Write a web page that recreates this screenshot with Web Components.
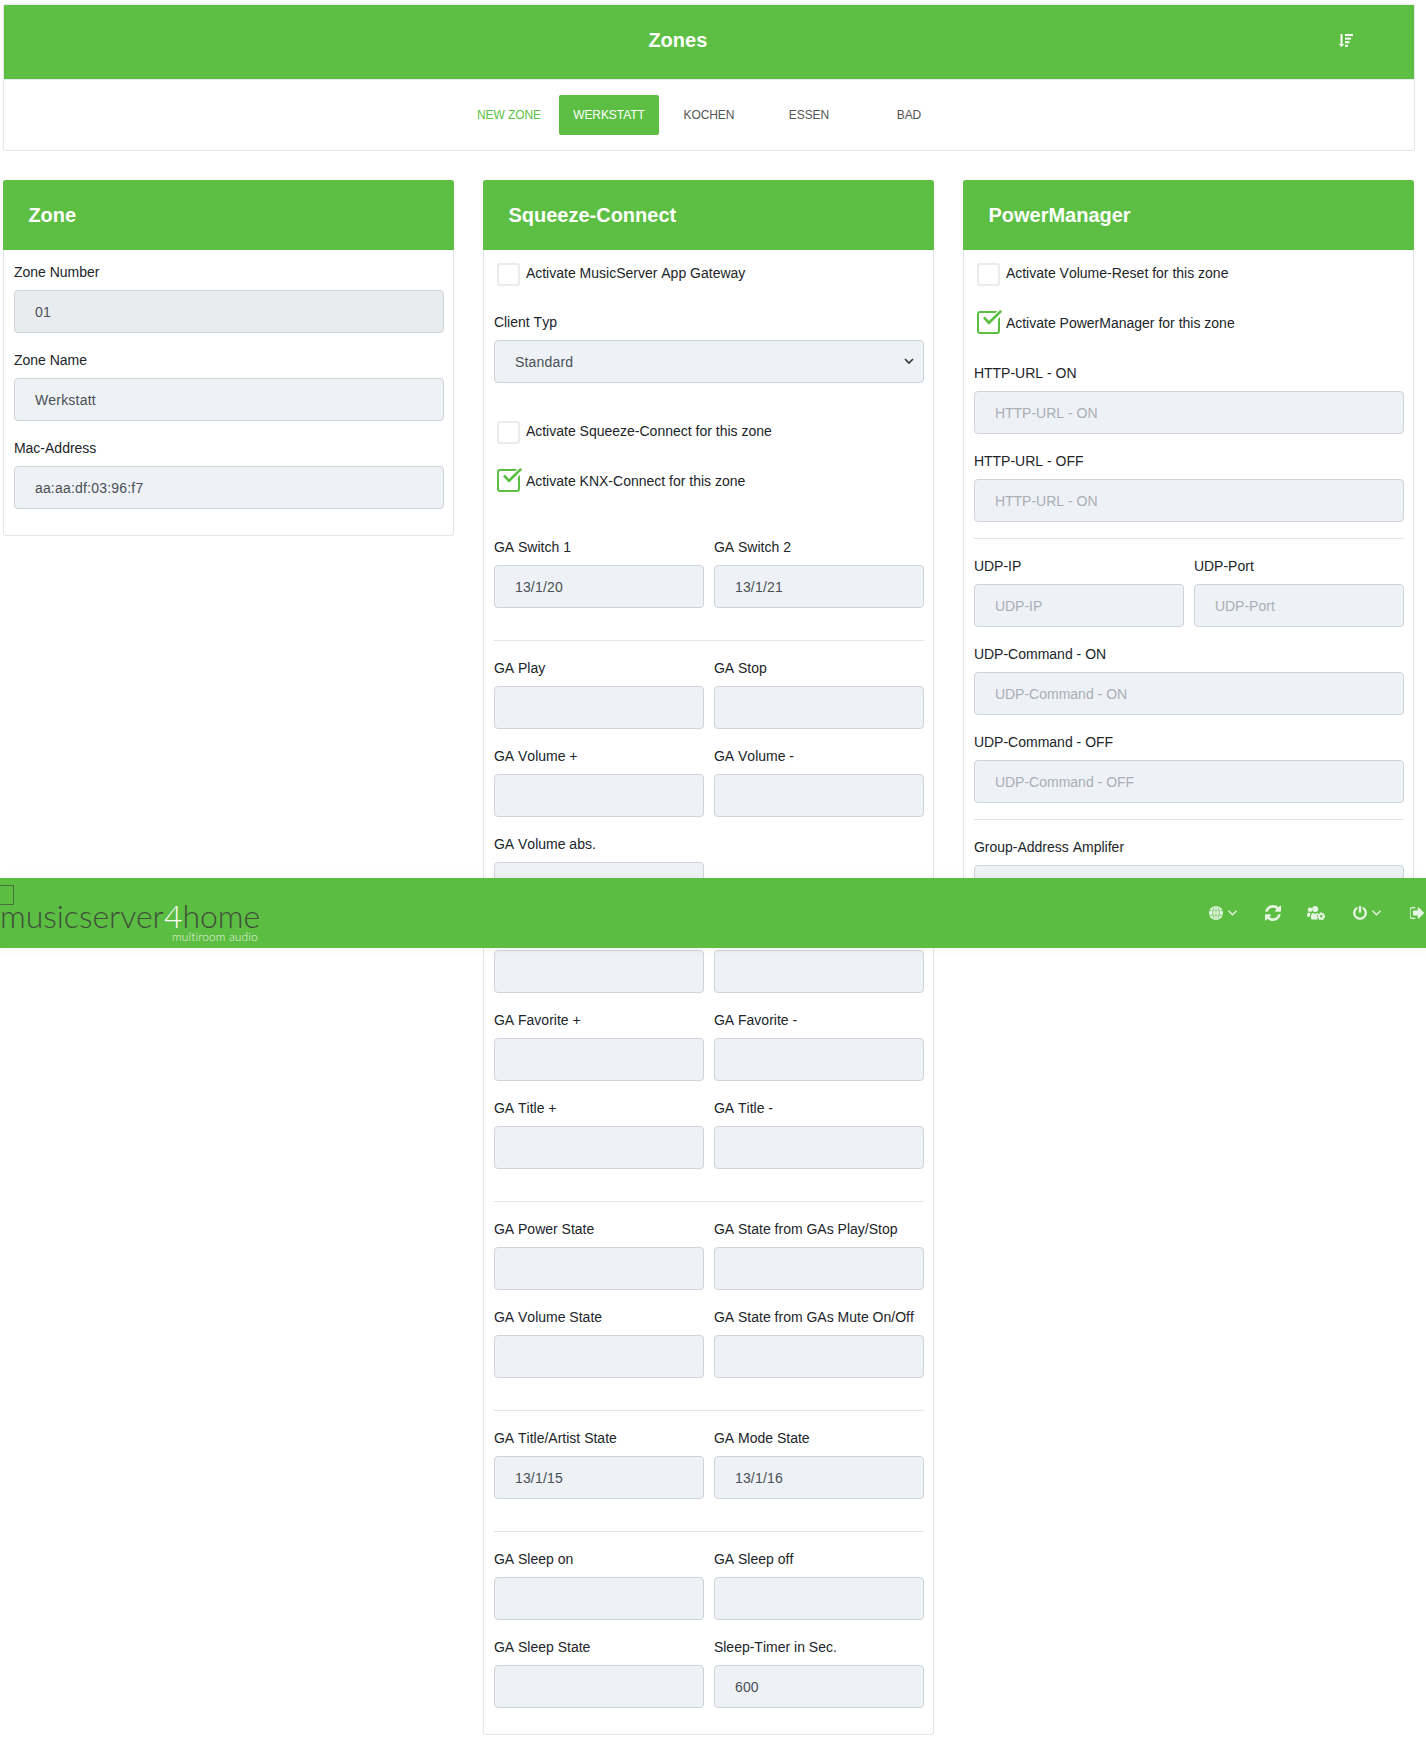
<!DOCTYPE html>
<html lang="en">
  <head>
    <meta charset="UTF-8" />
    <title>Zones</title>
    <style>
      html, body {
        margin: 0;
        background: #fff;
        font: 14px/21px "Liberation Sans", Arial, sans-serif;
        font-kerning: none;
        color: #212529;
      }
      main {
        display: block;
        padding: 4px 11.5px 0 3.4px;
        height: 1743px;
        overflow: hidden;
      }
      .grid {
        display: grid;
        grid-template-columns: repeat(3, 451px);
        gap: 29px;
        align-items: start;
        margin-top: 29px;
      }
      hr-line {
        margin: 16px 0;
      }
      .pair-end {
        margin-bottom: 16px;
      }
    </style>
  </head>
  <body>
    <main>
      <zones-head>
        <zone-tab>New Zone</zone-tab>
        <zone-tab active>Werkstatt</zone-tab>
        <zone-tab plain>Kochen</zone-tab>
        <zone-tab plain>Essen</zone-tab>
        <zone-tab plain>Bad</zone-tab>
      </zones-head>

      <div class="grid">
        <panel-card title="Zone">
          <form-field label="Zone Number" value="01" locked></form-field>
          <form-field label="Zone Name" value="Werkstatt"></form-field>
          <form-field label="Mac-Address" value="aa:aa:df:03:96:f7"></form-field>
        </panel-card>

        <panel-card title="Squeeze-Connect">
          <check-row style="margin-bottom: 25px">Activate MusicServer App Gateway</check-row>
          <form-field label="Client Typ" value="Standard" select style="margin-bottom: 36px"></form-field>
          <check-row style="margin-bottom: 23px">Activate Squeeze-Connect for this zone</check-row>
          <check-row checked style="margin-bottom: 44px">Activate KNX-Connect for this zone</check-row>

          <field-pair class="pair-end">
            <form-field label="GA Switch 1" value="13/1/20"></form-field>
            <form-field label="GA Switch 2" value="13/1/21"></form-field>
          </field-pair>
          <hr-line></hr-line>

          <field-pair>
            <form-field label="GA Play"></form-field>
            <form-field label="GA Stop"></form-field>
          </field-pair>
          <field-pair>
            <form-field label="GA Volume +"></form-field>
            <form-field label="GA Volume -"></form-field>
          </field-pair>
          <field-pair>
            <form-field label="GA Volume abs."></form-field>
            <div></div>
          </field-pair>
          <field-pair>
            <form-field label="&nbsp;"></form-field>
            <form-field label="&nbsp;"></form-field>
          </field-pair>
          <field-pair>
            <form-field label="GA Favorite +"></form-field>
            <form-field label="GA Favorite -"></form-field>
          </field-pair>
          <field-pair class="pair-end">
            <form-field label="GA Title +"></form-field>
            <form-field label="GA Title -"></form-field>
          </field-pair>
          <hr-line></hr-line>

          <field-pair>
            <form-field label="GA Power State"></form-field>
            <form-field label="GA State from GAs Play/Stop"></form-field>
          </field-pair>
          <field-pair class="pair-end">
            <form-field label="GA Volume State"></form-field>
            <form-field label="GA State from GAs Mute On/Off"></form-field>
          </field-pair>
          <hr-line></hr-line>

          <field-pair class="pair-end">
            <form-field label="GA Title/Artist State" value="13/1/15"></form-field>
            <form-field label="GA Mode State" value="13/1/16"></form-field>
          </field-pair>
          <hr-line></hr-line>

          <field-pair>
            <form-field label="GA Sleep on"></form-field>
            <form-field label="GA Sleep off"></form-field>
          </field-pair>
          <field-pair>
            <form-field label="GA Sleep State"></form-field>
            <form-field label="Sleep-Timer in Sec." value="600"></form-field>
          </field-pair>
        </panel-card>

        <panel-card title="PowerManager">
          <check-row style="margin-bottom: 23px">Activate Volume-Reset for this zone</check-row>
          <check-row checked style="margin-bottom: 28px">Activate PowerManager for this zone</check-row>
          <form-field label="HTTP-URL - ON" hint="HTTP-URL - ON"></form-field>
          <form-field label="HTTP-URL - OFF" hint="HTTP-URL - ON"></form-field>
          <hr-line></hr-line>
          <field-pair>
            <form-field label="UDP-IP" hint="UDP-IP"></form-field>
            <form-field label="UDP-Port" hint="UDP-Port"></form-field>
          </field-pair>
          <form-field label="UDP-Command - ON" hint="UDP-Command - ON"></form-field>
          <form-field label="UDP-Command - OFF" hint="UDP-Command - OFF"></form-field>
          <hr-line></hr-line>
          <form-field label="Group-Address Amplifer"></form-field>
        </panel-card>
      </div>
    </main>
    <top-bar></top-bar>

    <script>
      "use strict";
      const GREEN = "#5cbf43";

      class ZonesHead extends HTMLElement {
        constructor() {
          super();
          this.attachShadow({ mode: "open" });
          this.shadowRoot.innerHTML = `
            <style>
              :host { display: block; border: 1px solid #e3e6e8; border-top-color: #e8eaec; border-radius: 3px; height: 147px; box-sizing: border-box; }
              header { display: flex; align-items: center; height: 74px; background: ${GREEN}; color: #fff; padding: 0 60.5px 4px 644px; box-sizing: border-box; }
              h1 { font-size: 20px; line-height: 24px; margin: 0; font-weight: 700; }
              svg { margin-left: auto; width: 14px; height: 13px; fill: #fff; }
              nav { display: flex; justify-content: center; padding-top: 15px; border-top: 1px solid #e8eaec; }
            </style>
            <header>
              <h1>Zones</h1>
              <svg viewBox="0 0 14 13">
                <path d="M1.500 0h2v10h1.700L2.500 13 -.2 10h1.700z"/>
                <rect x="6" y="0" width="8" height="2"/>
                <rect x="6" y="3.600" width="6" height="2"/>
                <rect x="6" y="7.200" width="4.500" height="2"/>
                <rect x="6" y="10.800" width="3" height="2"/>
              </svg>
            </header>
            <nav><slot></slot></nav>`;
        }
      }

      class ZoneTab extends HTMLElement {
        constructor() {
          super();
          this.attachShadow({ mode: "open" });
          this.shadowRoot.innerHTML = `
            <style>
              :host { display: block; width: 100px; height: 40px; line-height: 40px; text-align: center; font-size: 12px; text-transform: uppercase; color: ${GREEN}; border-radius: 2px; font-kerning: normal; letter-spacing: -.08px; }
              :host([active]) { background: ${GREEN}; color: #fff; }
              :host([plain]) { color: #555; }
            </style>
            <slot></slot>`;
        }
      }

      class PanelCard extends HTMLElement {
        constructor() {
          super();
          this.attachShadow({ mode: "open" });
          this.shadowRoot.innerHTML = `
            <style>
              :host { display: block; border: 1px solid #e3e6e8; border-top: 0; border-radius: 3px; }
              header { height: 70px; background: ${GREEN}; color: #fff; padding: 0 24px; display: flex; align-items: center; border-radius: 3px 3px 0 0; margin: 0 -1px 0; }
              h2 { font-size: 20px; line-height: 24px; margin: 0 0 0 1px; font-weight: 700; }
              .body { padding: 11px 9.5px 10px; }
            </style>
            <header><h2></h2></header>
            <div class="body"><slot></slot></div>`;
          this.shadowRoot.querySelector("h2").textContent = this.getAttribute("title");
          this.removeAttribute("title");
        }
      }

      class FormField extends HTMLElement {
        constructor() {
          super();
          this.attachShadow({ mode: "open" });
          this.shadowRoot.innerHTML = `
            <style>
              :host { display: block; margin-bottom: 16px; min-width: 0; }
              label { display: block; height: 21px; margin-bottom: 8px; white-space: nowrap; position: relative; top: 1px; }
              .box { display: flex; align-items: center; justify-content: space-between; height: 43px; box-sizing: border-box; padding: 2px 9px 0 20px; background: #eef1f5; border: 1px solid #ced4da; border-radius: 4px; color: #495057; white-space: nowrap; letter-spacing: .2px; }
              :host([locked]) .box { background: #e9ecef; }
              .box.hint { color: #a9afb5; letter-spacing: 0; }
              svg { width: 10px; height: 7px; margin-top: -2px; fill: none; stroke: #343a40; stroke-width: 1.7; }
            </style>
            <label></label>
            <div class="box"><span></span></div>`;
          const root = this.shadowRoot;
          root.querySelector("label").textContent = this.getAttribute("label");
          const box = root.querySelector(".box");
          const hint = this.getAttribute("hint");
          box.querySelector("span").textContent = hint || this.getAttribute("value") || "";
          if (hint) box.classList.add("hint");
          if (this.hasAttribute("select")) {
            box.insertAdjacentHTML("beforeend", `<svg viewBox="0 0 10 7"><path d="M1 1l4 4 4-4"/></svg>`);
          }
        }
      }

      class FieldPair extends HTMLElement {
        constructor() {
          super();
          this.attachShadow({ mode: "open" });
          this.shadowRoot.innerHTML = `
            <style>
              :host { display: grid; grid-template-columns: 1fr 1fr; column-gap: 10px; }
            </style>
            <slot></slot>`;
        }
      }

      class HrLine extends HTMLElement {
        constructor() {
          super();
          this.attachShadow({ mode: "open" });
          this.shadowRoot.innerHTML = `
            <style>
              :host { display: block; height: 1px; background: #e3e6e8; }
            </style>`;
        }
      }

      class CheckRow extends HTMLElement {
        constructor() {
          super();
          this.attachShadow({ mode: "open" });
          this.shadowRoot.innerHTML = `
            <style>
              :host { display: flex; align-items: flex-start; padding: 2px 0 0 3px; height: 23px; }
              .box { position: relative; width: 23px; height: 23px; box-sizing: border-box; border: 2px solid #e9ebed; border-radius: 3px; flex: none; }
              :host([checked]) .box { border-color: ${GREEN}; }
              svg { position: absolute; left: 2px; top: -3px; width: 22px; height: 19px; fill: none; display: none; }
              :host([checked]) svg { display: block; }
              span { margin: -.5px 0 0 6px; white-space: nowrap; }
              :host([checked]) span { margin-top: 1.5px; }
            </style>
            <div class="box"><svg viewBox="0 0 22 19">
              <path d="M8 13.800L20.500 1" stroke="#fff" stroke-width="6"/>
              <path d="M3 7.500l5 5.300L20.200 .8" stroke="${GREEN}" stroke-width="2.600"/>
            </svg></div>
            <span><slot></slot></span>`;
        }
      }

      class TopBar extends HTMLElement {
        constructor() {
          super();
          this.attachShadow({ mode: "open" });
          this.shadowRoot.innerHTML = `
            <style>
              :host { position: absolute; left: 0; right: 0; top: 878px; height: 70px; background: #5bbd42; box-shadow: 0 0 10px rgba(0,0,0,.06); display: flex; align-items: center; justify-content: space-between; }
              .logo { position: relative; width: 262px; height: 70px; flex: none; }
              .square { position: absolute; left: -1px; top: 7px; width: 13px; height: 18px; border: 1px solid #47703a; }
              .word { position: absolute; left: 0; top: 22.700px; font: 300 32px/30px Lato, "Liberation Sans", sans-serif; color: #40503a; white-space: nowrap; letter-spacing: -.05px; }
              .word b { font-weight: 300; color: #fff; }
              .sub { position: absolute; left: 172px; top: 53px; font: 300 12px/12px Lato, "Liberation Sans", sans-serif; color: #e4f3df; white-space: nowrap; letter-spacing: .1px; }
              .tools { display: flex; align-items: center; padding: 0 2px 0 0; color: rgba(255,255,255,.85); }
              svg { display: block; fill: currentColor; }
              .chev { fill: none; stroke: currentColor; stroke-width: 1.3; width: 9px; height: 6px; margin-left: 5px; }
              .tool { display: flex; align-items: center; }
            </style>
            <div class="logo">
              <div class="square"></div>
              <div class="word">musicserver<b>4</b>home</div>
              <div class="sub">multiroom audio</div>
            </div>
            <div class="tools">
              <div class="tool" style="margin-right: 28px">
                <svg width="14" height="14" viewBox="0 0 14 14">
                  <path fill-rule="evenodd" d="M7 0a7 7 0 1 1 0 14A7 7 0 0 1 7 0zM.6 4.400v.7h12.800v-.7zM.5 8.800v.7h13v-.7zM4.200 1.200C3.600 3 3.400 5 3.400 7s.2 4 .8 5.800l.6-.2C4.400 11 4.200 9 4.200 7s.2-4 .6-5.600zm5.600 0l-.6.2c.4 1.600.6 3.600.6 5.600s-.2 4-.6 5.600l.6.2c.6-1.800.8-3.800.8-5.800s-.2-4-.8-5.800zM6.700.4v13.200h.6V.4z"/>
                </svg>
                <svg class="chev" viewBox="0 0 9 6"><path d="M.5.8l4 4 4-4"/></svg>
              </div>
              <svg width="16" height="16" viewBox="128 128 1536 1536" style="margin-right: 26px">
                <path d="M1639 1056q0 5-1 7-64 268-268 434.500t-478 166.500q-146 0-282.500-55t-243.500-157l-129 129q-19 19-45 19t-45-19-19-45v-448q0-26 19-45t45-19h448q26 0 45 19t19 45-19 45l-137 137q71 66 161 102t187 36q134 0 250-65t186-179q11-17 53-117 8-23 30-23h192q13 0 22.500 9.500t9.500 22.500zm25-800v448q0 26-19 45t-45 19h-448q-26 0-45-19t-19-45 19-45l138-138q-148-137-349-137-134 0-250 65t-186 179q-11 17-53 117-8 23-30 23h-199q-13 0-22.500-9.500t-9.500-22.500v-7q65-268 270-434.500t480-166.500q146 0 284 55.500t245 156.500l130-129q19-19 45-19t45 19 19 45z"/>
              </svg>
              <svg width="18" height="14" viewBox="0 0 18 14" style="margin-right: 28px">
                <circle cx="3" cy="3.800" r="2.300"/>
                <circle cx="8.200" cy="3" r="3"/>
                <path d="M0 9.500C0 7.500.6 6.600 1.800 6.600c.8.500 1.500.7 2.300.6C3.300 8 2.900 9.300 2.900 10.800H1.200C.5 10.800 0 10.400 0 9.500z"/>
                <path d="M3.800 11.500c0-2.900 1-4.600 2.400-4.600.6.500 1.300.8 2 .8s1.400-.3 2-.8c.5 0 1 .2 1.300.6-1 .7-1.600 1.900-1.600 3.200 0 1.200.5 2.200 1.300 2.900H5.500c-1 0-1.700-.9-1.700-2.100z"/>
                <circle cx="14.200" cy="10.300" r="2.200" fill="none" stroke="currentColor" stroke-width="1.900"/>
                <circle cx="14.200" cy="10.300" r="3.400" fill="none" stroke="currentColor" stroke-width="1.200" stroke-dasharray="1.600 1.250"/>
              </svg>
              <div class="tool" style="margin-right: 29px">
                <svg width="14" height="15" viewBox="128 128 1536 1664">
                  <path d="M1664 896q0 156-61 298t-164 245-245 164-298 61-298-61-245-164-164-245-61-298q0-182 80.500-343t226.500-270q43-32 95.500-25t83.500 50q32 42 24.500 94.500t-49.500 84.500q-98 74-151.500 181t-53.500 228q0 104 40.500 198.500t109.500 163.500 163.500 109.500 198.500 40.500 198.500-40.500 163.500-109.500 109.500-163.500 40.500-198.500q0-121-53.500-228t-151.500-181q-42-32-49.500-84.500t24.500-94.500q31-43 84-50t95 25q146 109 226.500 270t80.500 343zm-640-768v640q0 52-38 90t-90 38-90-38-38-90v-640q0-52 38-90t90-38 90 38 38 90z"/>
                </svg>
                <svg class="chev" viewBox="0 0 9 6"><path d="M.5.800l4 4 4-4"/></svg>
              </div>
              <svg width="14" height="12" viewBox="128 256 1504 1280">
                <path d="M704 1440q0 4 1 20t.5 26.500-3 23.500-10 19.500-20.500 6.500h-320q-119 0-203.500-84.500t-84.500-203.500v-704q0-119 84.500-203.500t203.500-84.500h320q13 0 22.500 9.500t9.500 22.500q0 4 1 20t.5 26.500-3 23.500-10 19.500-20.500 6.500h-320q-66 0-113 47t-47 113v704q0 66 47 113t113 47h312l11.500 1 11.500 3 8 5.500 7 9 2 13.500zm928-544q0 26-19 45l-544 544q-19 19-45 19t-45-19-19-45v-288h-448q-26 0-45-19t-19-45v-384q0-26 19-45t45-19h448v-288q0-26 19-45t45-19 45 19l544 544q19 19 19 45z"/>
              </svg>
            </div>`;
        }
      }

      customElements.define("zones-head", ZonesHead);
      customElements.define("zone-tab", ZoneTab);
      customElements.define("panel-card", PanelCard);
      customElements.define("form-field", FormField);
      customElements.define("field-pair", FieldPair);
      customElements.define("hr-line", HrLine);
      customElements.define("check-row", CheckRow);
      customElements.define("top-bar", TopBar);
    </script>
  </body>
</html>
